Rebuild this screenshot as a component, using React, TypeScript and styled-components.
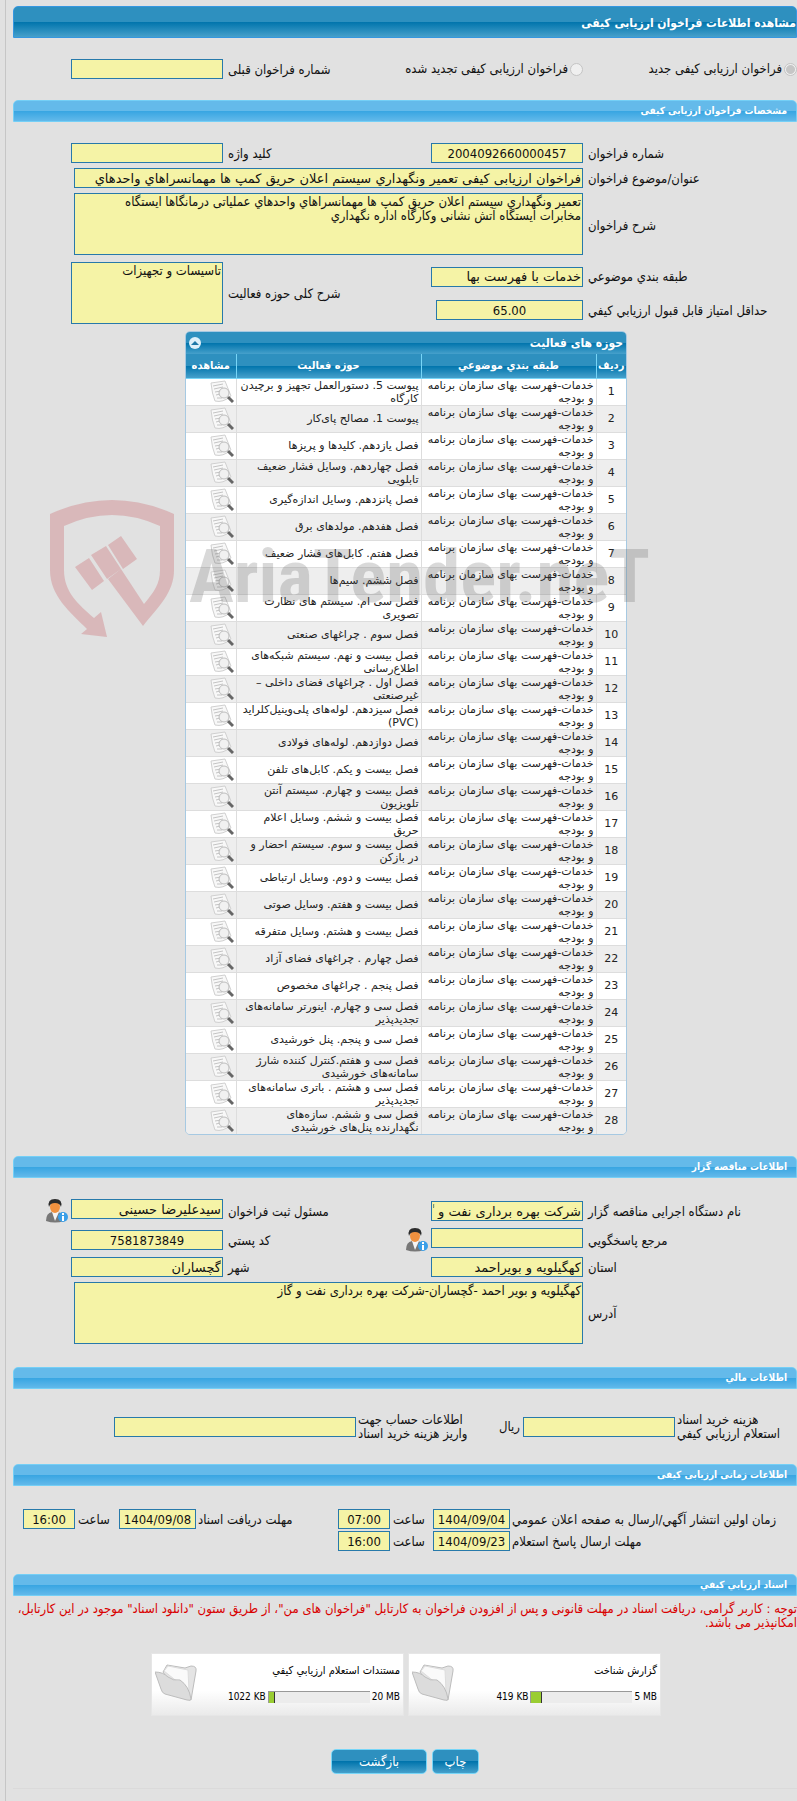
import React from "react";
import styled, { createGlobalStyle, css } from "styled-components";

const GlobalStyle = createGlobalStyle`
  * { box-sizing: border-box; }
  body {
    margin: 0;
    background: #e1e1e1;
    color: #111;
    font: 13px/14px "DejaVu Sans Condensed", "DejaVu Sans", sans-serif;
  }
  button, input, textarea { font-family: inherit; color: inherit; }
`;

const Page = styled.main`
  position: relative;
  margin-left: 5px;
  padding: 6px 0 12px 7px;
  border-left: 1px solid #c6c6c6;
`;

const Body = styled.div`
  padding-bottom: 14px;
  border-bottom: 1px solid #dadada;
`;

const blueSteel = css`
  background: linear-gradient(#2e90bf 0 50%, #0074ac 50%, #46a0cb 100%);
`;

const TitleBar = styled.h1`
  ${blueSteel}
  height: 32px;
  margin: 0;
  border: 1px solid #3597e0;
  border-radius: 5px 5px 0 0;
  color: #fff;
  font-size: 12px;
  line-height: 32px;
`;

const SectionBar = styled.h2`
  height: 22px;
  margin: 0;
  padding: 0 9px;
  border: 1px solid #74cff6;
  border-radius: 5px 5px 0 0;
  background: linear-gradient(#64baea 0 50%, #37a5e2 50%, #62b9ea 100%);
  color: #fff;
  font-size: 10px;
  line-height: 20px;
`;

const columns = css`
  display: grid;
  grid-template-columns: 214fr 152px 208fr 152px 58fr;
`;

const TypeRow = styled.div`
  ${columns}
  align-items: center;
  padding: 21px 0;
`;

const Choice = styled.label<{ $span?: boolean }>`
  display: flex;
  align-items: center;
  gap: 2px;
  white-space: nowrap;
  grid-column: ${(p) => (p.$span ? "2 / 3" : "auto")};
`;

const Radio = styled.input`
  appearance: none;
  flex: none;
  width: 13px;
  height: 13px;
  margin: 0;
  border: 1px solid #c4c4c4;
  border-radius: 50%;
  background: #efefef;
  &:checked { background: radial-gradient(#c6c6c6 0 4px, #efefef 5px); }
`;

const Fields = styled.div<{ $rows: string }>`
  ${columns}
  grid-template-rows: ${(p) => p.$rows};
  row-gap: 5px;
  align-items: center;
  padding-top: 21px;
`;

const Label = styled.label<{ $gap?: number; $rows?: number }>`
  padding-top: 1px;
  padding-left: ${(p) => p.$gap ?? 5}px;
  grid-row: span ${(p) => p.$rows ?? 1};
  text-align: left;
  white-space: nowrap;
`;

const box = css`
  border: 1px solid #2779aa;
  border-radius: 0;
  background: #f5f3a6;
  outline: none;
`;

const Field = styled.input<{ $center?: boolean; $wide?: boolean; $inset?: number; $top?: boolean }>`
  ${box}
  height: 20px;
  min-width: 0;
  width: auto;
  padding: 0 1px;
  font-family: ${(p) => (p.$center ? "inherit" : '"DejaVu Sans", sans-serif')};
  font-size: 13px;
  justify-self: stretch;
  text-align: ${(p) => (p.$center ? "center" : "right")};
  grid-column: ${(p) => (p.$wide ? "2 / 5" : "auto")};
  margin: 0 0 0 ${(p) => p.$inset ?? 0}px;
  align-self: ${(p) => (p.$top ? "start" : "center")};
`;

const Area = styled.textarea<{ $wide?: boolean }>`
  ${box}
  display: block;
  height: 62px;
  padding: 1px;
  resize: none;
  overflow: hidden;
  font-size: 13px;
  line-height: 14px;
  align-self: start;
  grid-column: ${(p) => (p.$wide ? "2 / 5" : "auto")};
  grid-row: ${(p) => (p.$wide ? "auto" : "span 2")};
  margin: 0 0 0 ${(p) => (p.$wide ? 3 : 0)}px;
`;

const Blank = styled.span`
  min-width: 0;
`;

const IconButton = styled.button`
  display: block;
  padding: 0;
  border: 0;
  background: none;
  line-height: 0;
`;

const Beside = styled.div`
  display: flex;
  align-items: center;
  justify-content: space-between;
  padding-right: 3px;
`;

const Grid = styled.section`
  width: 442px;
  margin: 7px 170px 0 auto;
  border: 1px solid #a6c9e2;
  border-radius: 5px;
  overflow: hidden;
`;

const GridTitle = styled.div`
  ${blueSteel}
  display: flex;
  align-items: center;
  justify-content: space-between;
  height: 22px;
  padding: 0 3px;
  color: #fff;
  font-size: 12px;
  font-weight: bold;
`;

const Collapse = styled.button`
  display: grid;
  place-items: center;
  width: 12px;
  height: 12px;
  padding: 0;
  border: 0;
  border-radius: 50%;
  background: #dff0fa;
`;

const Table = styled.table`
  width: 100%;
  table-layout: fixed;
  border-collapse: collapse;
  font-size: 11px;
  line-height: 13px;
  color: #222;
`;

const Head = styled.th<{ $w: number }>`
  ${blueSteel}
  width: ${(p) => p.$w}px;
  height: 24px;
  padding: 0;
  border: solid #77d5f7;
  border-width: 0 0 1px 1px;
  color: #fff;
  &:last-child { border-left: 0; }
`;

const Cell = styled.td<{ $center?: boolean }>`
  height: 27px;
  padding: 0 2px;
  border: solid #ddd;
  border-width: 0 0 1px 1px;
  font-family: "DejaVu Sans", sans-serif;
  text-align: ${(p) => (p.$center ? "center" : "right")};
  white-space: pre-line;
  &:last-child { border-left: 0; }
`;

const Row = styled.tr`
  background: #fff;
  &:nth-child(even) { background: #eee; }
  &:last-child td { border-bottom: 0; }
`;

const Spaced = styled.div<{ $top: number }>`
  margin-top: ${(p) => p.$top}px;
`;

const Finance = styled.div`
  display: grid;
  grid-template-columns: 122fr 152px 167fr 242px 101fr;
  align-items: center;
  padding-top: 23px;
`;

const Schedule = styled.div`
  display: grid;
  grid-template-columns: 287fr 77px 43px 52px 142fr 77px 44px 52px 10fr;
  row-gap: 2px;
  align-items: center;
  padding-top: 23px;
`;

const Warning = styled.p`
  margin: 6px 0 0;
  color: #d90000;
`;

const Cards = styled.div`
  display: flex;
  gap: 4px;
  padding: 23px 136px 0 0;
`;

const Card = styled.article`
  display: flex;
  justify-content: space-between;
  width: 253px;
  height: 63px;
  padding: 10px 3px 0;
  border: 1px solid #e6e6e6;
  background: linear-gradient(#fff 60%, #eaeaea);
  font-size: 11px;
`;

const CardText = styled.div`
  display: grid;
  align-content: start;
  gap: 12px;
  color: #000;
`;

const Meter = styled.div`
  display: flex;
  align-items: center;
  gap: 2px;
  font-size: 10px;
`;

const Track = styled.div`
  direction: ltr;
  width: 102px;
  height: 12px;
  border: solid #999;
  border-width: 1px 0 0 1px;
  background: #ececec;
`;

const Fill = styled.div`
  height: 11px;
  border-right: 1px solid #333;
  background: #9acd32;
`;

const Actions = styled.div`
  display: flex;
  gap: 5px;
  padding: 33px 318px 0 0;
`;

const Action = styled.button<{ $w: number }>`
  ${blueSteel}
  width: ${(p) => p.$w}px;
  height: 25px;
  padding: 0;
  border: 1px solid #77d5f7;
  border-radius: 5px;
  color: #fff;
  font-size: 13px;
`;

const Watermark = styled.div`
  position: absolute;
  top: 500px;
  left: 44px;
  display: flex;
  direction: ltr;
  gap: 14px;
  pointer-events: none;
`;

const Brand = styled.span`
  margin-top: 32px;
  color: rgba(80, 80, 80, 0.22);
  font: bold 75px/88px "Liberation Sans Narrow", "Roboto Condensed", sans-serif;
`;

const Shield = () => (
  <svg width="125" height="137" viewBox="0 0 125 137" fill="rgba(200,90,95,.3)" aria-hidden="true">
    <path d="M0 14Q62-14 124 14V70C124 93 108 107 93 126L58 79L71 69L94 104C104 92 110 84 110 70V26Q62 4 14 26V70C14 92 28 104 44 118L51 112L57 137L31 134L37 129C20 112 0 96 0 70Z" />
    <path d="M25 67L39 58L54 81L42 90ZM41 55L56 46L71 69L57 79ZM58 45L71 36L87 59L73 69Z" />
  </svg>
);

const PaperIcon = () => (
  <svg width="24" height="24" viewBox="0 0 24 24" fill="none">
    <path d="M1 3L15 1L17 6L21 16Q13 23 5 21Q2 14 1 3Z" fill="#f8f8f8" stroke="#d0d0d0" />
    <path d="M3 6L13 4M4 9L13 7M5 12L11 11M6 15L10 14M7 18L12 18" stroke="#c4c4c4" />
    <circle cx="14" cy="13" r="5" fill="#f0f0f0" fillOpacity=".85" stroke="#bdbdbd" />
    <path d="M18 17L23 22" stroke="#666" strokeWidth="3" />
  </svg>
);

const PersonIcon = () => (
  <svg width="22" height="24" viewBox="0 0 22 24">
    <path d="M0 22Q0 14 6 13L12 13Q18 14 18 22Q9 25 0 22Z" fill="#777" />
    <path d="M6 13L9 22L13 13Z" fill="#f4f4f4" />
    <ellipse cx="9" cy="8" rx="5" ry="6" fill="#f0913f" />
    <path d="M3 8Q1 0 9 0Q17 0 15 8Q14 4 9 4Q4 4 3 8Z" fill="#2b2b2b" />
    <circle cx="17" cy="18" r="5" fill="#3b9fe8" />
    <path d="M16 14h2v2h-2zM16 17h2v5h-2z" fill="#fff" />
  </svg>
);

const FolderIcon = () => (
  <svg width="42" height="38" viewBox="0 0 42 38" stroke="#bdbdbd">
    <path d="M8 8L12 1L30 4L36 2Q42 2 41 7L36 36L26 34Z" fill="#e4e4e4" />
    <path d="M9 7L13 2L33 6L34 27Z" fill="#fafafa" stroke="#ddd" />
    <path d="M0 8Q8 8 13 13Q18 17 25 16Q34 22 36 35Q36 37 32 36L10 30Q7 29 6 25Z" fill="#dcdcdc" />
  </svg>
);

const activities = [
  "پیوست 5. دستورالعمل تجهیز و برچیدن کارگاه",
  "پیوست 1. مصالح پای‌کار",
  "فصل یازدهم. کلیدها و پریزها",
  "فصل چهاردهم. وسایل فشار ضعیف تابلویی",
  "فصل پانزدهم. وسایل اندازه‌گیری",
  "فصل هفدهم. مولدهای برق",
  "فصل هفتم. کابل‌های فشار ضعیف",
  "فصل ششم. سیم‌ها",
  "فصل سی ام. سیستم های نظارت تصویری",
  "فصل سوم . چراغهای صنعتی",
  "فصل بیست و نهم. سیستم شبکه‌های اطلاع‌رسانی",
  "فصل اول . چراغهای فضای داخلی – غیرصنعتی",
  "فصل سیزدهم. لوله‌های پلی‌وینیل‌کلراید (PVC)",
  "فصل دوازدهم. لوله‌های فولادی",
  "فصل بیست و یکم. کابل‌های تلفن",
  "فصل بیست و چهارم. سیستم آنتن تلویزیون",
  "فصل بیست و ششم. وسایل اعلام حریق",
  "فصل بیست و سوم. سیستم احضار و در بازکن",
  "فصل بیست و دوم. وسایل ارتباطی",
  "فصل بیست و هفتم. وسایل صوتی",
  "فصل بیست و هشتم. وسایل متفرقه",
  "فصل چهارم . چراغهای فضای آزاد",
  "فصل پنجم . چراغهای مخصوص",
  "فصل سی و چهارم. اینورتر سامانه‌های تجدیدپذیر",
  "فصل سی و پنجم. پنل خورشیدی",
  "فصل سی و هفتم.کنترل کننده شارژ سامانه‌های خورشیدی",
  "فصل سی و هشتم . باتری سامانه‌های تجدیدپذیر",
  "فصل سی و ششم. سازه‌های\nنگهدارنده پنل‌های خورشیدی",
];

const documents = [
  { name: "گزارش شناخت", used: "419 KB", limit: "5 MB", percent: 10 },
  { name: "مستندات استعلام ارزيابي کيفي", used: "1022 KB", limit: "20 MB", percent: 6 },
];

export default function App() {
  return (
    <>
      <GlobalStyle />
      <Page dir="rtl" lang="fa">
        <Body>
          <TitleBar>مشاهده اطلاعات فراخوان ارزیابی کیفی</TitleBar>
          <TypeRow>
            <Choice><Radio type="radio" name="kind" defaultChecked disabled />فراخوان ارزیابی کیفی جدید</Choice>
            <Choice $span><Radio type="radio" name="kind" disabled />فراخوان ارزیابی کیفی تجدید شده</Choice>
            <Label htmlFor="previous">شماره فراخوان قبلی</Label>
            <Field id="previous" readOnly />
          </TypeRow>

          <SectionBar>مشخصات فراخوان ارزیابی کیفی</SectionBar>
          <Fields $rows="20px 20px 64px 29px 28px">
            <Label htmlFor="number">شماره فراخوان</Label>
            <Field id="number" $center readOnly defaultValue="2004092660000457" />
            <Label htmlFor="keyword">کلید واژه</Label>
            <Field id="keyword" readOnly />
            <Blank />
            <Label htmlFor="subject">عنوان/موضوع فراخوان</Label>
            <Field id="subject" $wide $inset={3} readOnly defaultValue="فراخوان ارزیابی کیفی تعمیر ونگهداري سیستم اعلان حریق کمپ ها مهمانسراهاي واحدهاي" />
            <Blank />
            <Label htmlFor="details">شرح فراخوان</Label>
            <Area id="details" $wide readOnly defaultValue={"تعمیر ونگهداري سیستم اعلان حریق کمپ ها مهمانسراهاي واحدهاي عملیاتی درمانگاها ایستگاه\nمخابرات ایستگاه آتش نشانی وکارگاه اداره نگهداري"} />
            <Blank />
            <Label htmlFor="category">طبقه بندي موضوعي</Label>
            <Field id="category" readOnly defaultValue="خدمات با فهرست بها" />
            <Label htmlFor="scope" $rows={2}>شرح کلی حوزه فعالیت</Label>
            <Area id="scope" readOnly defaultValue="تاسیسات و تجهیزات" />
            <Blank />
            <Label htmlFor="score">حداقل امتياز قابل قبول ارزيابي کيفي</Label>
            <Field id="score" $center $inset={5} readOnly defaultValue="65.00" />
          </Fields>

          <Grid>
            <GridTitle>
              حوزه های فعالیت
              <Collapse type="button" aria-label="بستن">
                <svg width="8" height="8" viewBox="0 0 8 8"><path d="M0 6L4 2L8 6Z" fill="#1f78a8" /></svg>
              </Collapse>
            </GridTitle>
            <Table>
              <thead>
                <tr>
                  <Head $w={30}>ردیف</Head>
                  <Head $w={175}>طبقه بندي موضوعي</Head>
                  <Head $w={185}>حوزه فعالیت</Head>
                  <Head $w={50}>مشاهده</Head>
                </tr>
              </thead>
              <tbody>
                {activities.map((name, i) => (
                  <Row key={name}>
                    <Cell $center>{i + 1}</Cell>
                    <Cell>خدمات-فهرست بهای سازمان برنامه و بودجه</Cell>
                    <Cell>{name}</Cell>
                    <Cell><IconButton type="button" aria-label="مشاهده"><PaperIcon /></IconButton></Cell>
                  </Row>
                ))}
              </tbody>
            </Table>
          </Grid>

          <Spaced $top={21}>
            <SectionBar>اطلاعات مناقصه گزار</SectionBar>
            <Fields $rows="24px 24px 20px 62px">
              <Label htmlFor="agency">نام دستگاه اجرایی مناقصه گزار</Label>
              <Field id="agency" readOnly defaultValue="شرکت بهره برداری نفت و گاز گچساران" />
              <Label htmlFor="registrar">مسئول ثبت فراخوان</Label>
              <Field id="registrar" $top readOnly defaultValue="سیدعلیرضا حسینی" />
              <Beside><IconButton type="button" aria-label="مسئول ثبت"><PersonIcon /></IconButton></Beside>
              <Label htmlFor="contact">مرجع پاسخگويي</Label>
              <Field id="contact" $top readOnly />
              <Beside>
                <IconButton type="button" aria-label="مرجع"><PersonIcon /></IconButton>
                <Label htmlFor="postcode">کد پستي</Label>
              </Beside>
              <Field id="postcode" $center readOnly defaultValue="7581873849" />
              <Blank />
              <Label htmlFor="province">استان</Label>
              <Field id="province" readOnly defaultValue="کهگیلویه و بویراحمد" />
              <Label htmlFor="city">شهر</Label>
              <Field id="city" readOnly defaultValue="گچساران" />
              <Blank />
              <Label htmlFor="address">آدرس</Label>
              <Area id="address" $wide readOnly defaultValue="کهگیلویه و بویر احمد -گچساران-شرکت بهره برداری نفت و گاز" />
            </Fields>
          </Spaced>

          <Spaced $top={23}>
            <SectionBar>اطلاعات مالي</SectionBar>
            <Finance>
              <Label htmlFor="fee" $gap={2}>هزینه خرید اسناد<br />استعلام ارزيابي کيفي</Label>
              <Field id="fee" readOnly />
              <Beside>
                <span>ریال</span>
                <Label htmlFor="account" $gap={2}>اطلاعات حساب جهت<br />واریز هزینه خرید اسناد</Label>
              </Beside>
              <Field id="account" readOnly />
            </Finance>
          </Spaced>

          <Spaced $top={23}>
            <SectionBar>اطلاعات زمانی ارزیابی کیفی</SectionBar>
            <Schedule>
              <Label htmlFor="publish" $gap={2}>زمان اولین انتشار آگهي/ارسال به صفحه اعلان عمومي</Label>
              <Field id="publish" $center readOnly defaultValue="1404/09/04" />
              <Label htmlFor="publishTime" $gap={3}>ساعت</Label>
              <Field id="publishTime" $center readOnly defaultValue="07:00" />
              <Label htmlFor="receive" $gap={2}>مهلت دریافت اسناد</Label>
              <Field id="receive" $center readOnly defaultValue="1404/09/08" />
              <Label htmlFor="receiveTime" $gap={3}>ساعت</Label>
              <Field id="receiveTime" $center readOnly defaultValue="16:00" />
              <Blank />
              <Label htmlFor="reply" $gap={2}>مهلت ارسال پاسخ استعلام</Label>
              <Field id="reply" $center readOnly defaultValue="1404/09/23" />
              <Label htmlFor="replyTime" $gap={3}>ساعت</Label>
              <Field id="replyTime" $center readOnly defaultValue="16:00" />
            </Schedule>
          </Spaced>

          <Spaced $top={23}>
            <SectionBar>اسناد ارزيابي کيفي</SectionBar>
            <Warning>
              توجه : کاربر گرامی، دریافت اسناد در مهلت قانونی و پس از افزودن فراخوان به کارتابل "فراخوان های من"، از طریق ستون "دانلود اسناد" موجود در این کارتابل، امکانپذیر می باشد.
            </Warning>
            <Cards>
              {documents.map((doc) => (
                <Card key={doc.name}>
                  <CardText>
                    {doc.name}
                    <Meter>
                      <bdi dir="ltr">{doc.limit}</bdi>
                      <Track role="progressbar" aria-label={doc.name} aria-valuenow={doc.percent}>
                        <Fill style={{ width: `${doc.percent}%` }} />
                      </Track>
                      <bdi dir="ltr">{doc.used}</bdi>
                    </Meter>
                  </CardText>
                  <FolderIcon />
                </Card>
              ))}
            </Cards>
            <Actions>
              <Action type="button" $w={47}>چاپ</Action>
              <Action type="button" $w={96}>بازگشت</Action>
            </Actions>
          </Spaced>
        </Body>
        <Watermark>
          <Shield />
          <Brand>AriaTender.neT</Brand>
        </Watermark>
      </Page>
    </>
  );
}
